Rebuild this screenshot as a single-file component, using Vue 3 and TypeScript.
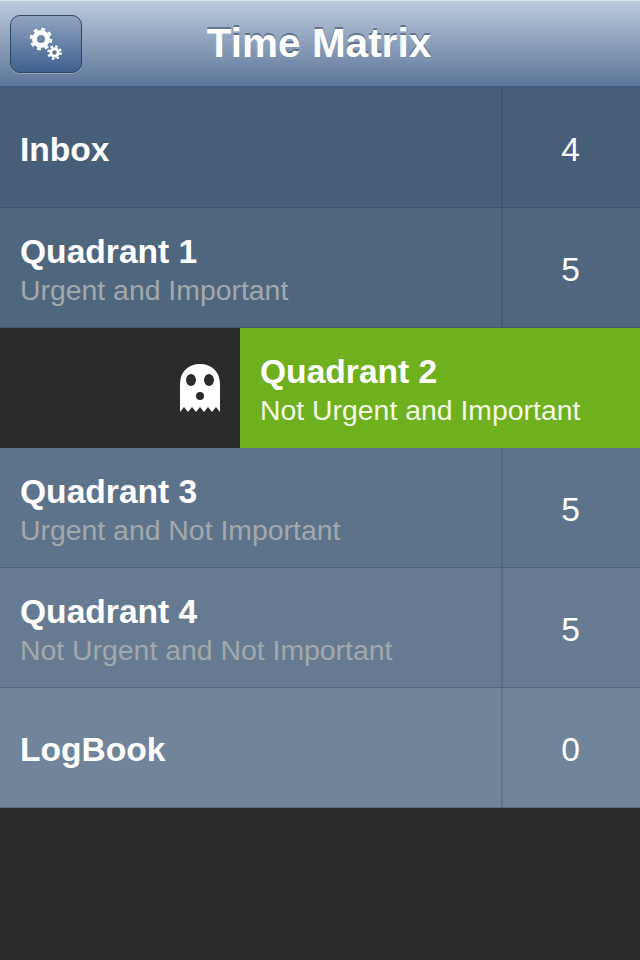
<script setup lang="ts">
interface Row {
  title: string;
  sub?: string;
  count?: number;
  bg: string;
  swiped?: boolean;
}

const rows: Row[] = [
  { title: 'Inbox', count: 4, bg: '#475e79' },
  { title: 'Quadrant 1', sub: 'Urgent and Important', count: 5, bg: '#4f667f' },
  { title: 'Quadrant 2', sub: 'Not Urgent and Important', bg: '#566d85', swiped: true },
  { title: 'Quadrant 3', sub: 'Urgent and Not Important', count: 5, bg: '#5d738b' },
  { title: 'Quadrant 4', sub: 'Not Urgent and Not Important', count: 5, bg: '#667b92' },
  { title: 'LogBook', count: 0, bg: '#70849a' },
];
</script>

<template>
  <div class="screen">
    <header class="nav">
      <div class="nav-left">
        <button class="settings" type="button" aria-label="Settings">
          <svg width="40" height="40" viewBox="0 0 40 40">
            <circle cx="15" cy="15" r="6.5" fill="none" stroke="#fff" stroke-width="5" />
            <circle cx="15" cy="15" r="10" fill="none" stroke="#fff" stroke-width="2.6" stroke-dasharray="3.9 3.95" />
            <circle cx="28.5" cy="28.5" r="3.7" fill="none" stroke="#fff" stroke-width="3" />
            <circle cx="28.5" cy="28.5" r="6.2" fill="none" stroke="#fff" stroke-width="2.2" stroke-dasharray="2.45 2.42" />
          </svg>
        </button>
      </div>
      <h1 class="title">Time Matrix</h1>
      <div></div>
    </header>

    <ul class="list">
      <li v-for="row in rows" :key="row.title" class="row" :style="{ background: row.bg }">
        <template v-if="row.swiped">
          <div class="reveal">
            <svg width="40" height="48" viewBox="0 0 40 48">
              <path
                fill="#fff"
                fill-rule="evenodd"
                d="M0 20C0 8 8 0 20 0s20 8 20 20v28l-4-5-4 5-4-5-4 5-4-5-4 5-4-5-4 5-4-5-4 5z
                   M6 16a5 6 0 1 0 10 0a5 6 0 1 0-10 0z
                   M24 16a5 6 0 1 0 10 0a5 6 0 1 0-10 0z
                   M16 32a4 4 0 1 0 8 0a4 4 0 1 0-8 0z"
              />
            </svg>
          </div>
          <div class="card">
            <div class="name">{{ row.title }}</div>
            <div class="sub">{{ row.sub }}</div>
          </div>
        </template>
        <template v-else>
          <div class="main">
            <div class="name">{{ row.title }}</div>
            <div v-if="row.sub" class="sub">{{ row.sub }}</div>
          </div>
          <div class="count">{{ row.count }}</div>
        </template>
      </li>
    </ul>
  </div>
</template>

<style>
html,
body {
  margin: 0;
  background: #2a2a2a;
}
</style>

<style scoped>
.screen,
.reveal {
  background-color: #2a2a2a;
  background-image:
    repeating-linear-gradient(45deg, rgba(255, 255, 255, 0.018) 0 1px, transparent 1px 3px),
    repeating-linear-gradient(-45deg, rgba(0, 0, 0, 0.06) 0 1px, transparent 1px 3px);
}

.screen {
  width: 640px;
  height: 960px;
  overflow: hidden;
  font-family: 'Liberation Sans', Arial, sans-serif;
}

.nav {
  height: 88px;
  box-sizing: border-box;
  display: grid;
  grid-template-columns: 1fr auto 1fr;
  align-items: center;
  background: linear-gradient(#bccadc, #5b7599);
  border-top: 1px solid #dfe5ec;
  border-bottom: 2px solid #3f5a80;
}

.nav-left {
  padding-left: 10px;
}

.settings {
  display: flex;
  align-items: center;
  justify-content: center;
  width: 72px;
  height: 58px;
  padding: 0;
  box-sizing: border-box;
  border: 1px solid #2f4662;
  border-radius: 10px;
  background: linear-gradient(#8fa4c0, #3f5f8e);
  box-shadow: 0 1px 0 rgba(255, 255, 255, 0.3);
}

.title {
  margin: 0;
  padding-right: 2px;
  color: #fff;
  font-size: 40.5px;
  font-weight: 700;
  text-shadow: 0 -2px 0 rgba(60, 80, 110, 0.6);
}

.list {
  margin: 0;
  padding: 0;
  list-style: none;
}

.row {
  display: flex;
  height: 120px;
  box-sizing: border-box;
  color: #fff;
  box-shadow: inset 0 -1px 0 rgba(40, 60, 85, 0.3);
}

.main,
.card {
  display: flex;
  flex-direction: column;
  justify-content: center;
  flex: 1;
  box-sizing: border-box;
  padding: 4px 0 0 20px;
}

.name {
  font-size: 33.6px;
  font-weight: 700;
  line-height: 40px;
}

.sub {
  font-size: 28.4px;
  line-height: 36px;
  color: #a3a8ab;
}

.count {
  width: 139px;
  display: flex;
  align-items: center;
  justify-content: center;
  box-sizing: border-box;
  padding: 4px 2px 0 0;
  font-size: 33.6px;
  border-left: 2px solid rgba(40, 60, 85, 0.22);
}

.reveal {
  width: 240px;
  display: flex;
  align-items: center;
  justify-content: flex-end;
  padding-right: 20px;
  box-sizing: border-box;
}

.card {
  background: #6fb01f;
}

.card .sub {
  color: #f1f7e6;
}
</style>
